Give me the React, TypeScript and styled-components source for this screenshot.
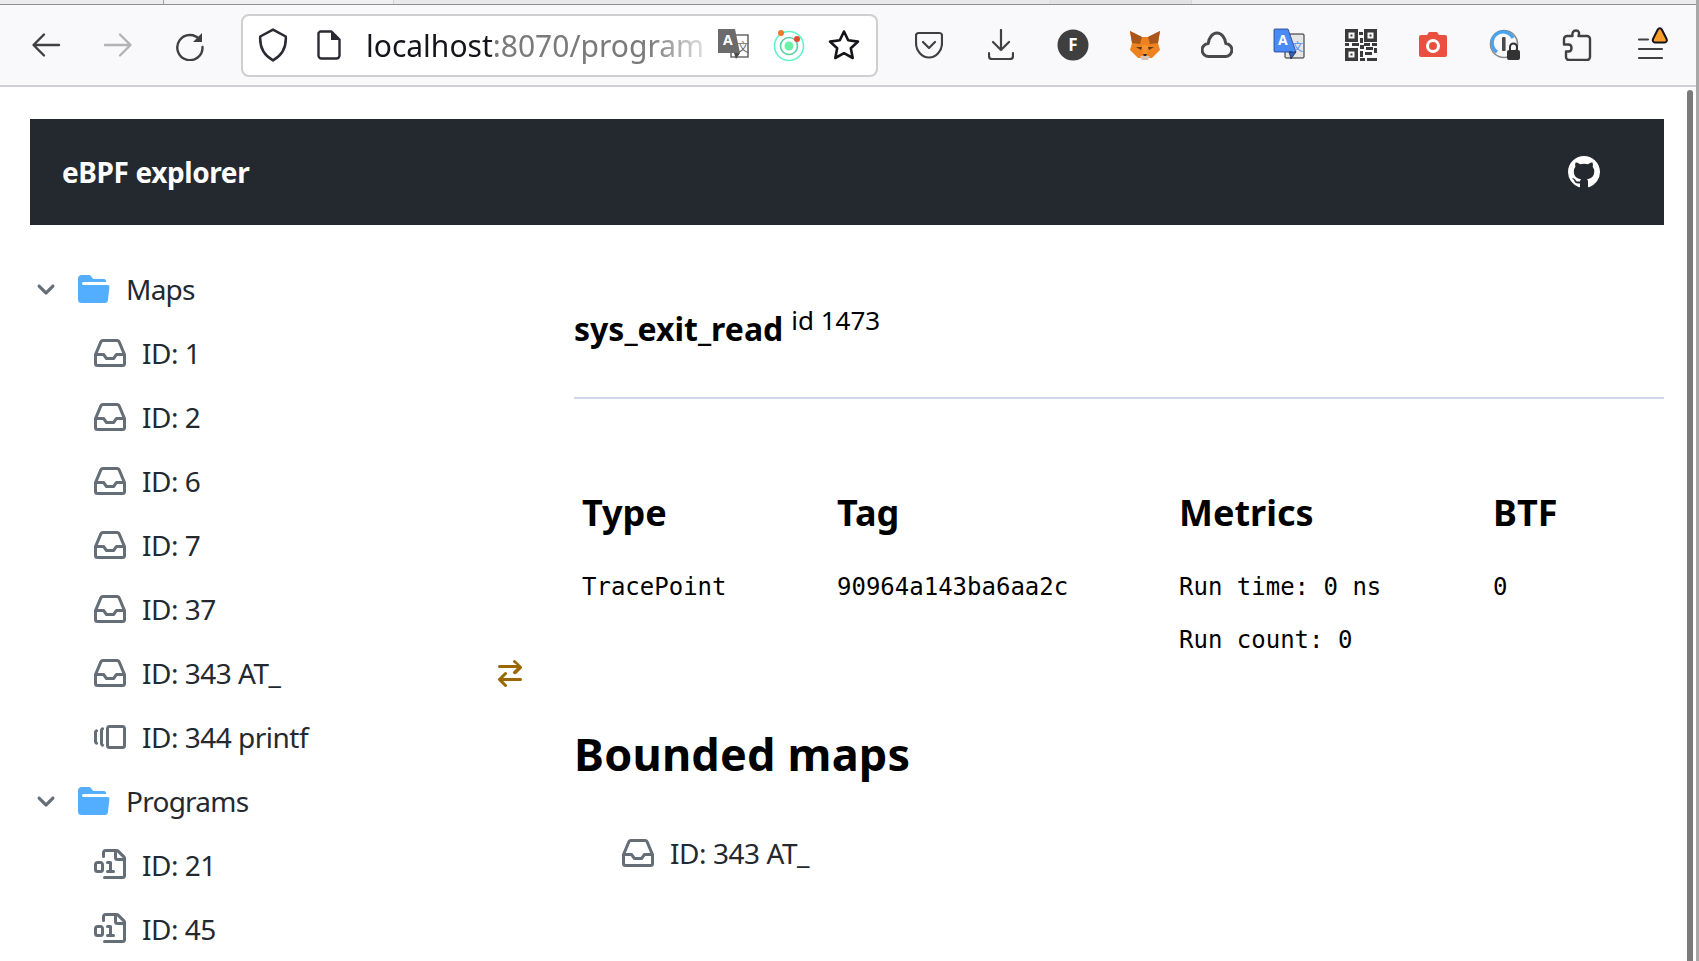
import React from "react";
import styled, { createGlobalStyle } from "styled-components";

const Global = createGlobalStyle`
  html, body { margin: 0; padding: 0; height: 100%; overflow: hidden; background: #fff; }
  body { font-family: "Noto Sans", "Liberation Sans", sans-serif; color: #24292f; }
  #root { height: 100%; }
`;

const Window = styled.div`
  display: flex; flex-direction: column; height: 961px; width: 1699px; overflow: hidden;
  border-right: 3px solid #a8a8a8; box-sizing: border-box;
`;
const TabStrip = styled.div`
  height: 4px; background: #ececec; border-bottom: 1px solid #8f8f8f; display: flex; flex-shrink: 0;
`;
const TabPiece = styled.div<{ $w: number; $bg: string; $edge: string }>`
  width: ${(p) => p.$w}px; background: ${(p) => p.$bg}; border-right: 1px solid ${(p) => p.$edge}; box-sizing: border-box;
`;
const Toolbar = styled.div`
  height: 80px; flex-shrink: 0; background: #f9f9fb; border-bottom: 2px solid #cfcfd8;
  display: flex; align-items: center; padding-left: 28px; box-sizing: content-box;
`;
const NavButton = styled.div<{ $w: number }>`
  width: ${(p) => p.$w}px; height: 32px; display: flex; align-items: center; flex-shrink: 0;
`;
const UrlBar = styled.div`
  width: 637px; height: 63px; box-sizing: border-box; margin-left: 15px;
  border: 2px solid #cfcfcf; border-radius: 8px; background: #fff;
  display: flex; align-items: center; padding-left: 14px; flex-shrink: 0;
`;
const UrlText = styled.div`
  width: 345px; margin-left: 21px; font-size: 30px; white-space: nowrap; overflow: hidden;
  font-family: "Noto Sans", sans-serif; color: #15141a;
  -webkit-mask-image: linear-gradient(to right, #000 82%, rgba(0,0,0,.15) 100%);
  mask-image: linear-gradient(to right, #000 82%, rgba(0,0,0,.15) 100%);
  span { color: #7a7a7a; }
`;
const UrlIcon = styled.div<{ $ml: number }>`
  margin-left: ${(p) => p.$ml}px; width: 32px; height: 32px; flex-shrink: 0; display: flex; align-items: center; justify-content: center;
`;
const ExtIcons = styled.div`
  display: flex; align-items: center; margin-left: 35px; gap: 40px;
`;
const Ext = styled.div`
  width: 32px; height: 34px; display: flex; align-items: center; justify-content: center; flex-shrink: 0; position: relative;
`;
const MenuSvg = styled.svg`
  width: 44px; height: 40px; flex-shrink: 0;
`;
const Viewport = styled.div`
  flex: 1; display: flex; min-height: 0; background: #fff; overflow: hidden;
`;
const Content = styled.div`
  width: 1664px; padding: 32px 0 0 30px; box-sizing: border-box; flex-shrink: 0; overflow: hidden;
`;
const Track = styled.div`
  margin-left: 23px; width: 6px; padding-top: 3px; background: #fff;
`;
const Thumb = styled.div`
  width: 6px; height: 900px; border-radius: 3px; background: #7b7b7b;
`;
const Header = styled.header`
  height: 106px; background: #24292f; display: flex; align-items: center; justify-content: space-between;
  padding: 0 64px 0 32px; color: #fff;
`;
const Brand = styled.div`
  font-size: 28px; font-weight: 700; letter-spacing: -0.4px; color: #fff;
`;
const Columns = styled.div`
  display: grid; grid-template-columns: 544px 1090px; padding-top: 32px;
`;
const Tree = styled.ul`
  list-style: none; margin: 0; padding: 0;
`;
const Row = styled.li`
  height: 64px; display: flex; align-items: center; font-size: 28px; letter-spacing: -0.5px; color: #24292f;
  position: relative;
`;
const FolderRow = styled(Row)`
  letter-spacing: -0.75px;
`;
const OcticonSvg = styled.svg<{ $color: string; $left?: number; $right?: number }>`
  width: 32px; height: 32px; flex-shrink: 0; fill: ${(p) => p.$color};
  margin-left: ${(p) => p.$left ?? 0}px; margin-right: ${(p) => p.$right ?? 0}px;
`;
const ChevronSvg = styled.svg`
  width: 24px; height: 24px; flex-shrink: 0; fill: #656d76; margin: 0 4px;
`;
const Trailing = styled.span`
  position: absolute; left: 464px; top: 16px; width: 32px; height: 32px; display: flex;
`;
const Main = styled.main`
  min-width: 0;
`;
const TitleBlock = styled.div`
  border-bottom: 2px solid #d0d7e8; padding-top: 50px; box-sizing: border-box; height: 142px;
`;
const Title = styled.h1`
  display: inline; font-size: 32px; font-weight: 700; color: #000; margin: 0;
`;
const Sup = styled.sup`
  font-size: 26px; color: #000; margin-left: 8px; vertical-align: 11px; line-height: 0;
`;
const Stats = styled.div`
  display: grid; grid-template-columns: 255px 342px 314px 1fr; padding: 82px 0 0 8px;
`;
const StatHead = styled.div`
  font-size: 36px; font-weight: 700; color: #000; line-height: 64px;
`;
const StatCell = styled.div`
  font-family: "DejaVu Sans Mono", "Liberation Mono", monospace; font-size: 24px; color: #000; padding-top: 16px;
  p { margin: 0; line-height: 53px; height: 53px; white-space: nowrap; }
`;
const Section = styled.h2`
  font-size: 45px; font-weight: 700; letter-spacing: 0.2px; color: #000; margin: 57px 0 0; line-height: 60px;
`;
const Bound = styled.div`
  height: 64px; display: flex; align-items: center; font-size: 28px; letter-spacing: -0.45px; color: #24292f; margin-top: 37px;
`;

const paths = {
  inbox: "M2.8 2.06A1.75 1.75 0 0 1 4.41 1h7.18c.7 0 1.333.417 1.61 1.06l2.74 6.395c.04.093.06.194.06.295v4.5A1.75 1.75 0 0 1 14.25 15H1.75A1.75 1.75 0 0 1 0 13.25v-4.5c0-.101.02-.202.06-.295Zm1.61.44a.25.25 0 0 0-.23.152L1.887 8H4.75a.75.75 0 0 1 .6.3L6.625 10h2.75l1.275-1.7a.75.75 0 0 1 .6-.3h2.863L11.82 2.652a.25.25 0 0 0-.23-.152Zm10.09 7h-2.875l-1.275 1.7a.75.75 0 0 1-.6.3h-3.5a.75.75 0 0 1-.6-.3L4.375 9.5H1.5v3.75c0 .138.112.25.25.25h12.5a.25.25 0 0 0 .25-.25Z",
  binary: "M4 1.75C4 .784 4.784 0 5.75 0h5.586c.464 0 .909.184 1.237.513l2.914 2.914c.329.328.513.773.513 1.237v8.586A1.75 1.75 0 0 1 14.25 15h-9a.75.75 0 0 1 0-1.5h9a.25.25 0 0 0 .25-.25V6h-2.75A1.75 1.75 0 0 1 10 4.25V1.5H5.75a.25.25 0 0 0-.25.25v2a.75.75 0 0 1-1.5 0Zm-4 6C0 6.784.784 6 1.75 6h1.5C4.216 6 5 6.784 5 7.75v2.5A1.75 1.75 0 0 1 3.25 12h-1.5A1.75 1.75 0 0 1 0 10.25ZM6.75 6h1.5a.75.75 0 0 1 .75.75v3.75h.75a.75.75 0 0 1 0 1.5h-3a.75.75 0 0 1 0-1.5h.75v-3h-.75a.75.75 0 0 1 0-1.5Zm-5 1.5a.25.25 0 0 0-.25.25v2.5c0 .138.112.25.25.25h1.5a.25.25 0 0 0 .25-.25v-2.5a.25.25 0 0 0-.25-.25Zm9.75-5.938V4.25c0 .138.112.25.25.25h2.688l-.011-.013-2.914-2.914-.013-.011Z",
  versions: "M7.75 14A1.75 1.75 0 0 1 6 12.25v-8.5C6 2.784 6.784 2 7.75 2h6.5c.966 0 1.75.784 1.75 1.75v8.5A1.75 1.75 0 0 1 14.25 14Zm-.25-1.75c0 .138.112.25.25.25h6.5a.25.25 0 0 0 .25-.25v-8.5a.25.25 0 0 0-.25-.25h-6.5a.25.25 0 0 0-.25.25ZM4.9 3.508a.75.75 0 0 1-.274 1.025.249.249 0 0 0-.126.217v6.5c0 .09.048.173.126.217a.75.75 0 0 1-.752 1.298A1.75 1.75 0 0 1 3 11.25v-6.5c0-.649.353-1.214.874-1.516a.75.75 0 0 1 1.025.274ZM1.9 4.508a.75.75 0 0 1-.274 1.025.249.249 0 0 0-.126.217v4.5c0 .09.048.173.126.217a.75.75 0 0 1-.752 1.298A1.75 1.75 0 0 1 0 10.25v-4.5c0-.649.353-1.214.874-1.516a.75.75 0 0 1 1.025.274Z",
  swap: "M5.22 14.78a.75.75 0 0 0 1.06-1.06L4.56 12h8.69a.75.75 0 0 0 0-1.5H4.56l1.72-1.72a.75.75 0 0 0-1.06-1.06l-3 3a.75.75 0 0 0 0 1.06l3 3Zm5.56-6.5a.75.75 0 1 1-1.06-1.06l1.72-1.72H2.75a.75.75 0 0 1 0-1.5h8.69L9.72 2.78a.75.75 0 0 1 1.06-1.06l3 3a.75.75 0 0 1 0 1.06l-3 3Z",
  folder: "M.513 1.513A1.75 1.75 0 0 1 1.75 1h3.5c.55 0 1.07.26 1.4.7l.9 1.2a.25.25 0 0 0 .2.1H13a1 1 0 0 1 1 1v.5H2.75a.75.75 0 0 0 0 1.5h11.978a1 1 0 0 1 .994 1.117L15 13.25A1.75 1.75 0 0 1 13.25 15H1.75A1.75 1.75 0 0 1 0 13.25V2.75c0-.464.184-.91.513-1.237Z",
  github: "M8 0c4.42 0 8 3.58 8 8a8.013 8.013 0 0 1-5.45 7.59c-.4.08-.55-.17-.55-.38 0-.27.01-1.13.01-2.2 0-.75-.25-1.23-.54-1.48 1.78-.2 3.65-.88 3.65-3.95 0-.88-.31-1.59-.82-2.15.08-.2.36-1.02-.08-2.12 0 0-.67-.22-2.2.82-.64-.18-1.32-.27-2-.27-.68 0-1.36.09-2 .27-1.53-1.03-2.2-.82-2.2-.82-.44 1.1-.16 1.92-.08 2.12-.51.56-.82 1.28-.82 2.15 0 3.06 1.86 3.75 3.64 3.95-.23.2-.44.55-.51 1.07-.46.21-1.61.55-2.33-.66-.15-.24-.6-.83-1.23-.82-.67.01-.27.38.01.53.34.19.73.9.82 1.13.16.45.68 1.31 2.69.94 0 .67.01 1.3.01 1.49 0 .21-.15.45-.55.38A7.995 7.995 0 0 1 0 8c0-4.42 3.58-8 8-8Z",
};

type IconName = keyof typeof paths;
const Octicon = ({ name, color = "#656d76", left, right }: { name: IconName; color?: string; left?: number; right?: number }) => (
  <OcticonSvg viewBox="0 0 16 16" $color={color} $left={left} $right={right}><path d={paths[name]} /></OcticonSvg>
);

const Leaf = ({ icon, label, swap }: { icon: IconName; label: string; swap?: boolean }) => (
  <Row>
    <Octicon name={icon} left={64} right={16} />{label}
    {swap && <Trailing><Octicon name="swap" color="#9a6700" /></Trailing>}
  </Row>
);

const Folder = ({ label }: { label: string }) => (
  <FolderRow>
    <ChevronSvg viewBox="0 0 12 12"><path d="M6 8.825c-.2 0-.4-.1-.5-.2l-3.5-3.5c-.3-.3-.3-.8 0-1.1.3-.3.8-.3 1.1 0l2.9 2.9 2.9-2.9c.3-.3.8-.3 1.1 0 .3.3.3.8 0 1.1l-3.5 3.5c-.1.1-.3.2-.5.2z" /></ChevronSvg>
    <Octicon name="folder" color="#54aeff" left={16} right={16} />{label}
  </FolderRow>
);

const Fox = () => (
  <svg width="32" height="32" viewBox="0 0 32 32">
    <polygon points="1,2 13,8 19,8 31,2 29,14 31,21 23,29 9,29 1,21 3,14" fill="#ee8220" />
    <polygon points="1,2 13,8 11,15 3,14" fill="#a8561c" />
    <polygon points="31,2 19,8 21,15 29,14" fill="#a8561c" />
    <polygon points="11,27 21,27 19,31 13,31" fill="#d7c1b3" />
    <polygon points="14,25 18,25 17,27 15,27" fill="#24292f" />
    <polygon points="7,18 13,18 12,21" fill="#5a3a22" />
    <polygon points="25,18 19,18 20,21" fill="#5a3a22" />
    <polygon points="13,16 19,16 18,25 14,25" fill="#f6932c" />
  </svg>
);

const Qr = () => (
  <svg width="32" height="32" viewBox="0 0 32 32" fill="#3a3a3a">
    <path fillRule="evenodd" d="M0 0h13v13H0zM3.5 3.5v6h6v-6zM19 0h13v13H19zM22.5 3.5v6h6v-6zM0 19h13v13H0zM3.5 22.5v6h6v-6z" />
    <path d="M5.5 5.5h2v2h-2zM24.5 5.5h2v2h-2zM5.5 24.5h2v2h-2zM14 3h4v3h-4zM15 9h3v5h-3zM0 14h4v3H0zM7 14h7v3H7zM19 14h6v3h-6zM27 14h5v3h-5zM15 16h4v4h-4zM21 18h7v3h-7zM29 19h3v5h-3zM15 22h3v6h-3zM20 23h7v3h-7zM15 29h5v3h-5zM22 29h10v3H22z" />
  </svg>
);

export default function App() {
  return (
    <Window>
      <Global />
      <TabStrip>
        <TabPiece $w={164} $bg="#ececec" $edge="#a0a0a0" />
        <TabPiece $w={230} $bg="#f0f0f0" $edge="#d0d0d0" />
        <TabPiece $w={656} $bg="#e9e9e9" $edge="#e0e0e0" />
        <TabPiece $w={142} $bg="#e2e2e2" $edge="#d8d8d8" />
      </TabStrip>
      <Toolbar>
        <NavButton $w={72}>
          <svg width="36" height="32" viewBox="0 0 32 32" fill="none" stroke="#404040" strokeWidth="2.4" strokeLinecap="round" strokeLinejoin="round"><path d="M4 16h25M14 5.5 3.5 16 14 26.5" /></svg>
        </NavButton>
        <NavButton $w={74}>
          <svg width="36" height="32" viewBox="0 0 32 32" fill="none" stroke="#b3b3b3" strokeWidth="2.4" strokeLinecap="round" strokeLinejoin="round"><path d="M3 16h25M18 5.5 28.5 16 18 26.5" /></svg>
        </NavButton>
        <NavButton $w={52}>
          <svg width="32" height="32" viewBox="0 0 32 32" fill="none"><path d="M26 11A12.6 12.6 0 1 0 28.5 18" stroke="#404040" strokeWidth="2.4" strokeLinecap="round" /><path d="M19 13 28 4v9z" fill="#404040" /></svg>
        </NavButton>
        <UrlBar>
          <UrlIcon $ml={0}>
            <svg width="30" height="34" viewBox="0 0 28 32" fill="none" stroke="#2b2a33" strokeWidth="2.4" strokeLinejoin="round"><path d="M14 1.5 26 8c.6 9-2 17-12 22.500C4 25 1.4 17 2 8z" /></svg>
          </UrlIcon>
          <UrlIcon $ml={24}>
            <svg width="24" height="30" viewBox="0 0 24 30" fill="none"><path d="M3 1.5h11.5L22.5 9.5v16a3 3 0 0 1-3 3H4.5a3 3 0 0 1-3-3V3z" stroke="#2b2a33" strokeWidth="2.4" strokeLinejoin="round" /><path d="M14 1.5V10h8.5z" fill="#2b2a33" /></svg>
          </UrlIcon>
          <UrlText>localhost<span>:8070/program</span></UrlText>
          <UrlIcon $ml={6}>
            <svg width="34" height="36" viewBox="0 0 32 34"><path d="M14 7h17v22H14z" fill="#fff" stroke="#6b6b6b" strokeWidth="1.6" /><path d="M1 1h17l5 24H1z" fill="#6b6b6b" /><path d="M17 25h6l-4 6z" fill="#4a4a4a" /><text x="6" y="17" fontSize="14" fontWeight="700" fill="#fff" fontFamily="Noto Sans">A</text><text x="20" y="24" fontSize="12" fill="#6b6b6b" fontFamily="Noto Sans CJK SC">文</text></svg>
          </UrlIcon>
          <UrlIcon $ml={24}>
            <svg width="32" height="34" viewBox="0 0 32 34"><circle cx="16" cy="18" r="14.5" fill="none" stroke="#5ff5c8" strokeWidth="1.6" /><circle cx="16" cy="18" r="8.5" fill="none" stroke="#5ccfa0" strokeWidth="1.6" /><circle cx="16" cy="18" r="4.5" fill="#6cf2a6" /><circle cx="8" cy="5" r="3" fill="#f07a2c" /><circle cx="24" cy="11" r="3" fill="#e8492e" /></svg>
          </UrlIcon>
          <UrlIcon $ml={23}>
            <svg width="32" height="32" viewBox="0 0 32 32" fill="none" stroke="#15141a" strokeWidth="2.6" strokeLinejoin="round"><path d="M16 2.5 20.2 11.3 30 12.6 22.8 19.3 24.7 29 16 24.2 7.3 29 9.2 19.3 2 12.6 11.8 11.3z" /></svg>
          </UrlIcon>
        </UrlBar>
        <ExtIcons>
          <Ext><svg width="28" height="28" viewBox="0 0 28 28" fill="none" stroke="#404040" strokeWidth="2.2" strokeLinecap="round" strokeLinejoin="round"><path d="M3.5 2h21A2.5 2.5 0 0 1 27 4.5V12c0 8-6 14.5-13 14.5S1 20 1 12V4.5A2.5 2.5 0 0 1 3.5 2z" /><path d="m8 11 6 6 6-6" /></svg></Ext>
          <Ext><svg width="26" height="32" viewBox="0 0 26 32" fill="none" stroke="#404040" strokeWidth="2.2" strokeLinecap="round" strokeLinejoin="round"><path d="M13 1v20M5 13l8 8 8-8M1 24v3a3 3 0 0 0 3 3h18a3 3 0 0 0 3-3v-3" /></svg></Ext>
          <Ext><svg width="32" height="32" viewBox="0 0 32 32"><circle cx="16" cy="16" r="15.5" fill="#3f3f3f" /><text x="16" y="22" textAnchor="middle" fontSize="17" fontWeight="700" fill="#fff" fontFamily="Noto Sans">F</text></svg></Ext>
          <Ext><Fox /></Ext>
          <Ext><svg width="32" height="28" viewBox="0 0 32 28" fill="none" stroke="#4a4a4a" strokeWidth="3"><path d="M8 25.5a6.5 6.5 0 0 1-.8-13C8 6.5 11.5 2 16 2s8 4.5 8.8 10.5a6.5 6.5 0 0 1-.8 13z" strokeLinejoin="round" /></svg></Ext>
          <Ext><svg width="32" height="34" viewBox="0 0 32 34"><rect x="12" y="6" width="19" height="24" fill="#e5e5e5" stroke="#222" strokeWidth="1" rx="1" /><path d="M2 1h13l8 23H2a1 1 0 0 1-1-1V2a1 1 0 0 1 1-1z" fill="#4a8af4" stroke="#1a3f8a" strokeWidth=".8" /><path d="M16 24h7l-5 7z" fill="#2f62bd" stroke="#111" strokeWidth=".6" /><text x="5" y="17" fontSize="14" fontWeight="700" fill="#fff" fontFamily="Noto Sans">A</text><text x="19" y="23" fontSize="11" fill="#4a8af4" fontFamily="Noto Sans CJK SC">文</text></svg></Ext>
          <Ext><Qr /></Ext>
          <Ext><svg width="30" height="26" viewBox="0 0 30 26"><path d="M3 3h6l2-3h8l2 3h6a2 2 0 0 1 2 2v18a2 2 0 0 1-2 2H3a2 2 0 0 1-2-2V5a2 2 0 0 1 2-2z" fill="#ea5040" /><circle cx="15" cy="14" r="5.5" fill="none" stroke="#fff" strokeWidth="3" /></svg></Ext>
          <Ext>
            <svg width="32" height="32" viewBox="0 0 32 32"><circle cx="15" cy="15" r="13.5" fill="none" stroke="#8a8a8a" strokeWidth="1.6" /><path d="M24 9A11 11 0 1 0 8 23" fill="none" stroke="#4aa3ee" strokeWidth="3.4" /><rect x="13" y="8" width="3.6" height="14" fill="#4a4a4a" rx="1" /><rect x="18" y="21" width="13" height="10" rx="2" fill="#333" /><path d="M21 21v-3a3.5 3.5 0 0 1 7 0v3" fill="none" stroke="#333" strokeWidth="2" /></svg>
          </Ext>
          <Ext><svg width="30" height="32" viewBox="0 0 30 32" fill="none" stroke="#404040" strokeWidth="2.4" strokeLinejoin="round"><path d="M14 1.5c3 0 3.7 2.5 2.5 5.5H25a3 3 0 0 1 3 3v18a3 3 0 0 1-3 3H7a3 3 0 0 1-3-3v-5.5h2.500c4 0 4-7 0-7H2V10a3 3 0 0 1 3-3h5.500C10 4 11 1.5 14 1.5z" /></svg></Ext>
          <Ext>
            <MenuSvg viewBox="0 0 44 40" fill="none" stroke="#404040" strokeWidth="2.2" strokeLinecap="round"><path d="M12 14.5h9M12 24h23M12 33h23" /><path d="M26 14 30.800 4.500c1-1.800 3-1.800 4 0L39.600 14c.8 1.600-.2 3.600-2 3.600h-9.600c-1.800 0-2.800-2-2-3.600z" fill="#fa9d2b" stroke="#15141a" strokeWidth="2" strokeLinejoin="round" /></MenuSvg>
          </Ext>
        </ExtIcons>
      </Toolbar>
      <Viewport>
        <Content>
          <Header>
            <Brand>eBPF explorer</Brand>
            <Octicon name="github" color="#fff" />
          </Header>
          <Columns>
            <Tree>
              <Folder label="Maps" />
              <Leaf icon="inbox" label="ID: 1" />
              <Leaf icon="inbox" label="ID: 2" />
              <Leaf icon="inbox" label="ID: 6" />
              <Leaf icon="inbox" label="ID: 7" />
              <Leaf icon="inbox" label="ID: 37" />
              <Leaf icon="inbox" label="ID: 343 AT_" swap />
              <Leaf icon="versions" label="ID: 344 printf" />
              <Folder label="Programs" />
              <Leaf icon="binary" label="ID: 21" />
              <Leaf icon="binary" label="ID: 45" />
            </Tree>
            <Main>
              <TitleBlock>
                <Title>sys_exit_read</Title><Sup>id 1473</Sup>
              </TitleBlock>
              <Stats>
                <StatHead>Type</StatHead>
                <StatHead>Tag</StatHead>
                <StatHead>Metrics</StatHead>
                <StatHead>BTF</StatHead>
                <StatCell><p>TracePoint</p></StatCell>
                <StatCell><p>90964a143ba6aa2c</p></StatCell>
                <StatCell><p>Run time: 0 ns</p><p>Run count: 0</p></StatCell>
                <StatCell><p>0</p></StatCell>
              </Stats>
              <Section>Bounded maps</Section>
              <Bound><Octicon name="inbox" left={48} right={16} />ID: 343 AT_</Bound>
            </Main>
          </Columns>
        </Content>
        <Track><Thumb /></Track>
      </Viewport>
    </Window>
  );
}
